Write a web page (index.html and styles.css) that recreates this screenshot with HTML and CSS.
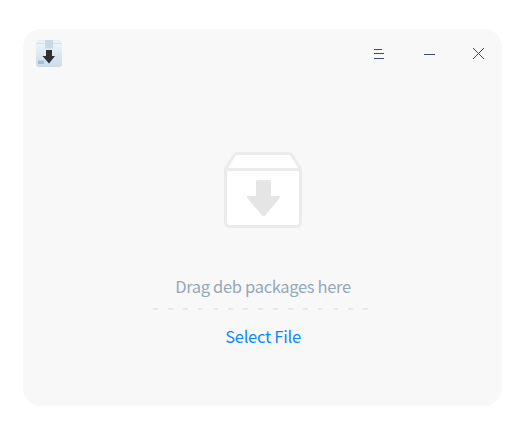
FILE: index.html
```html
<!DOCTYPE html>
<html lang="en">
<head>
<meta charset="utf-8">
<title>Package Installer</title>
<link rel="stylesheet" href="styles.css">
</head>
<body>
<div class="window">
  <header class="titlebar">
    <svg class="app-icon" width="26" height="27" viewBox="0 0 26 27">
      <defs><linearGradient id="box" x1="0" y1="0" x2="0" y2="1"><stop offset="0" stop-color="#f0f8fd"/><stop offset="1" stop-color="#c9dbeb"/></linearGradient></defs>
      <rect width="26" height="27" rx="3" fill="url(#box)"/>
      <path d="M3 0H23Q25 0 26 3.500H0Q1 0 3 0Z" fill="#e6f1f9"/>
      <path d="M0 3.500H26" stroke="#c9e4f7"/>
      <path d="M9 0H17V9L16 8L15 9L14 8L13 9L12 8L11 9L10 8L9 9Z" fill="#c9d9e3"/>
      <path d="M10 10H16V16H19L13 23.500L6.500 16H10Z" fill="#303030"/>
      <rect x="2" y="20.500" width="6" height="3.500" fill="#a8bdce"/>
    </svg>
    <nav class="controls">
      <svg width="50" height="50" viewBox="0 0 50 50"><path d="M22 20.500H30M22 24.500H32M22 29.500H32" /></svg>
      <svg width="50" height="50" viewBox="0 0 50 50"><path d="M22 25.500H33" /></svg>
      <svg width="50" height="50" viewBox="0 0 50 50"><path d="M21 19L32 30M32 19L21 30" /></svg>
    </nav>
  </header>
  <main class="drop">
    <svg class="package" width="78" height="76" viewBox="0 0 78 76">
      <path d="M1.500 17V70Q1.500 74.500 6 74.500H72Q76.500 74.500 76.500 70V17L67.500 2.700Q66.700 1.500 65 1.500H13Q11.300 1.500 10.500 2.700ZM1.500 17.500H76.500" fill="#fff" stroke="#ebebeb" stroke-width="3"/>
      <path d="M33.500 28H45.500Q47 28 47 29.500V44H54.500Q57 44 55.500 46.200L41.500 63Q39.500 65.500 37.500 63L23.500 46.200Q22 44 24.500 44H32V29.500Q32 28 33.500 28Z" fill="#e5e5e5"/>
    </svg>
    <p class="hint">Drag deb packages here</p>
    <svg class="divider" width="215" height="2"><path d="M0 1H215" stroke="#e8e8e8" stroke-width="2" stroke-dasharray="5 10"/></svg>
    <a class="select">Select File</a>
  </main>
</div>
</body>
</html>
```
FILE: styles.css
```css
body { margin: 0; background: #fff; font-family: "Noto Sans CJK SC", sans-serif; }
.window { box-sizing: border-box; width: 479px; height: 377px; margin: 29px 0 0 23px; background: #f8f8f8; border-radius: 18px; }
.titlebar { display: flex; justify-content: space-between; height: 50px; padding-left: 13px; }
.app-icon { margin-top: 11px; }
.controls { display: flex; }
.controls svg { fill: none; stroke: #414d68; stroke-width: 1; }
.drop { display: flex; flex-direction: column; align-items: center; padding: 73px 0 0 1px; }
.package, .divider { display: block; }
.hint { margin: 45px 0 0; font-size: 16.5px; letter-spacing: -0.33px; line-height: 26px; color: #93a8ba; }
.divider { margin: 9px 5px 0 0; }
.select { margin-top: 13px; font-size: 16.5px; letter-spacing: -0.25px; line-height: 26px; color: #0a88ff; }
```
